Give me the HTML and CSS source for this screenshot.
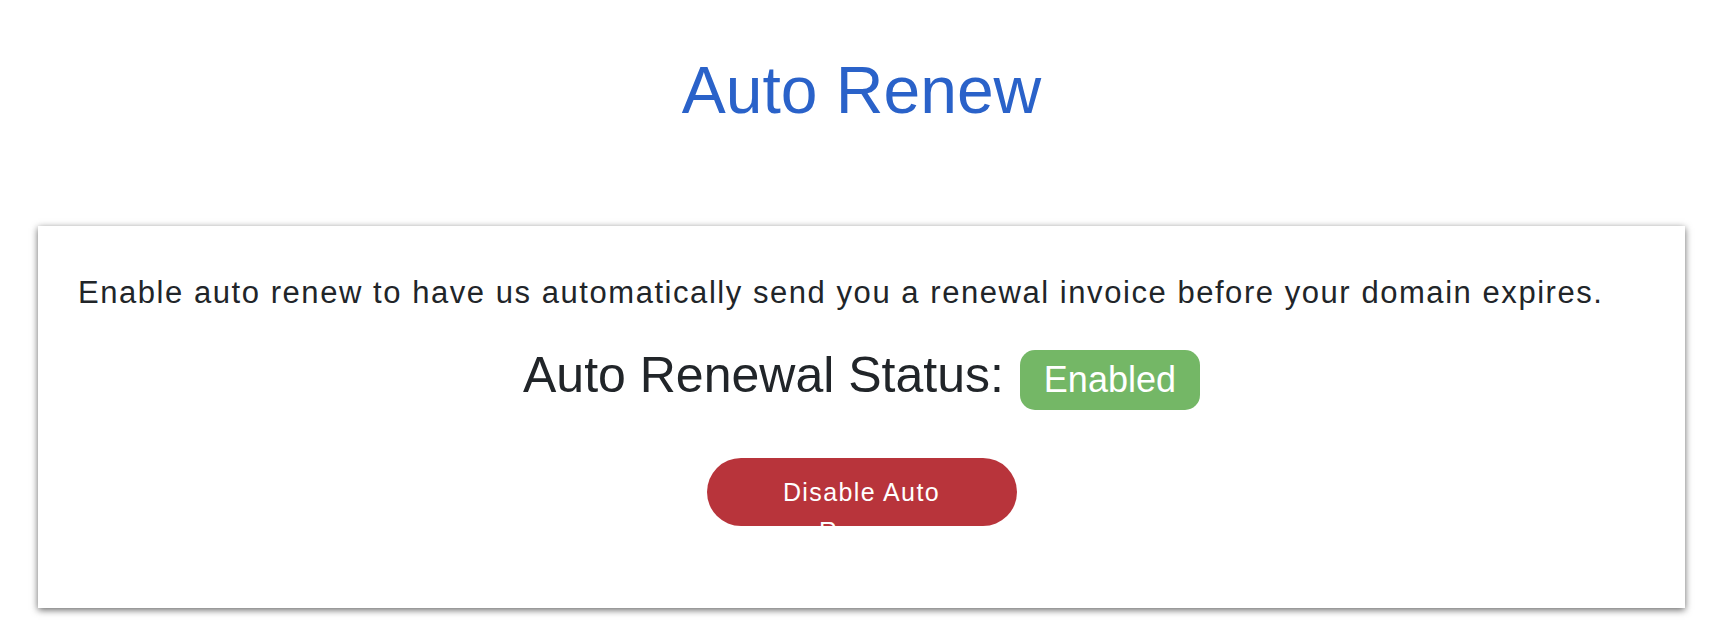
FILE: index.html
```html
<!DOCTYPE html>
<html lang="en">
<head>
  <meta charset="UTF-8">
  <title>Auto Renew</title>
  <link rel="stylesheet" href="styles.css">
</head>
<body>
  <div class="page">
    <h1 class="title">Auto Renew</h1>

    <div class="card">
      <p class="intro">Enable auto renew to have us automatically send you a renewal invoice before your domain expires.</p>

      <div class="status">
        <span class="status-label">Auto Renewal Status:</span>
        <span class="badge green">Enabled</span>
      </div>

      <div class="actions">
        <a href="#" class="pill red" onclick="toggleRenew(); return false;">Disable Auto Renew</a>
      </div>
    </div>
  </div>

  <script>
    function toggleRenew() {
      // заглушка, сервера нет
      console.log("toggle auto renew");
    }
  </script>
</body>
</html>
```

FILE: styles.css
```css
body {
  margin: 0;
  background: #fff;
  color: #212529;
  font-family: "Liberation Sans", Arial, Helvetica, sans-serif;
}
.page {
  width: 1647px;
  margin-left: 38px;
  padding: 51px 0 20px;
}
.title {
  margin: 0 0 96px;
  font-size: 66px;
  font-weight: normal;
  line-height: 1.2;
  text-align: center;
  color: #2a62c9;
}
.card {
  height: 382px;
  box-sizing: border-box;
  padding: 44px 40px 0;
  background: #fff;
  box-shadow: 0 2px 7px rgba(0, 0, 0, 0.6);
}
.intro {
  margin: 0 0 30px;
  font-size: 31px;
  line-height: 45px;
  letter-spacing: 1.55px;
}
.status {
  display: flex;
  justify-content: center;
  align-items: baseline;
  gap: 16px;
}
.status-label {
  font-size: 50px;
  line-height: 1.2;
}
.badge {
  display: inline-block;
  height: 60px;
  padding: 0 24px;
  border-radius: 15px;
  font-size: 36px;
  line-height: 60px;
  color: #fff;
}
.green { background-color: #74b766; }
.actions {
  display: flex;
  justify-content: center;
  margin-top: 48px;
}
.pill {
  display: block;
  width: 310px;
  height: 68px;
  box-sizing: border-box;
  padding: 15px 60px 0;
  border-radius: 34px;
  font-size: 25px;
  line-height: 39px;
  letter-spacing: 1.4px;
  text-align: center;
  text-decoration: none;
  color: #fff;
  cursor: pointer;
}
.red { background-color: #b8343b; }
```
